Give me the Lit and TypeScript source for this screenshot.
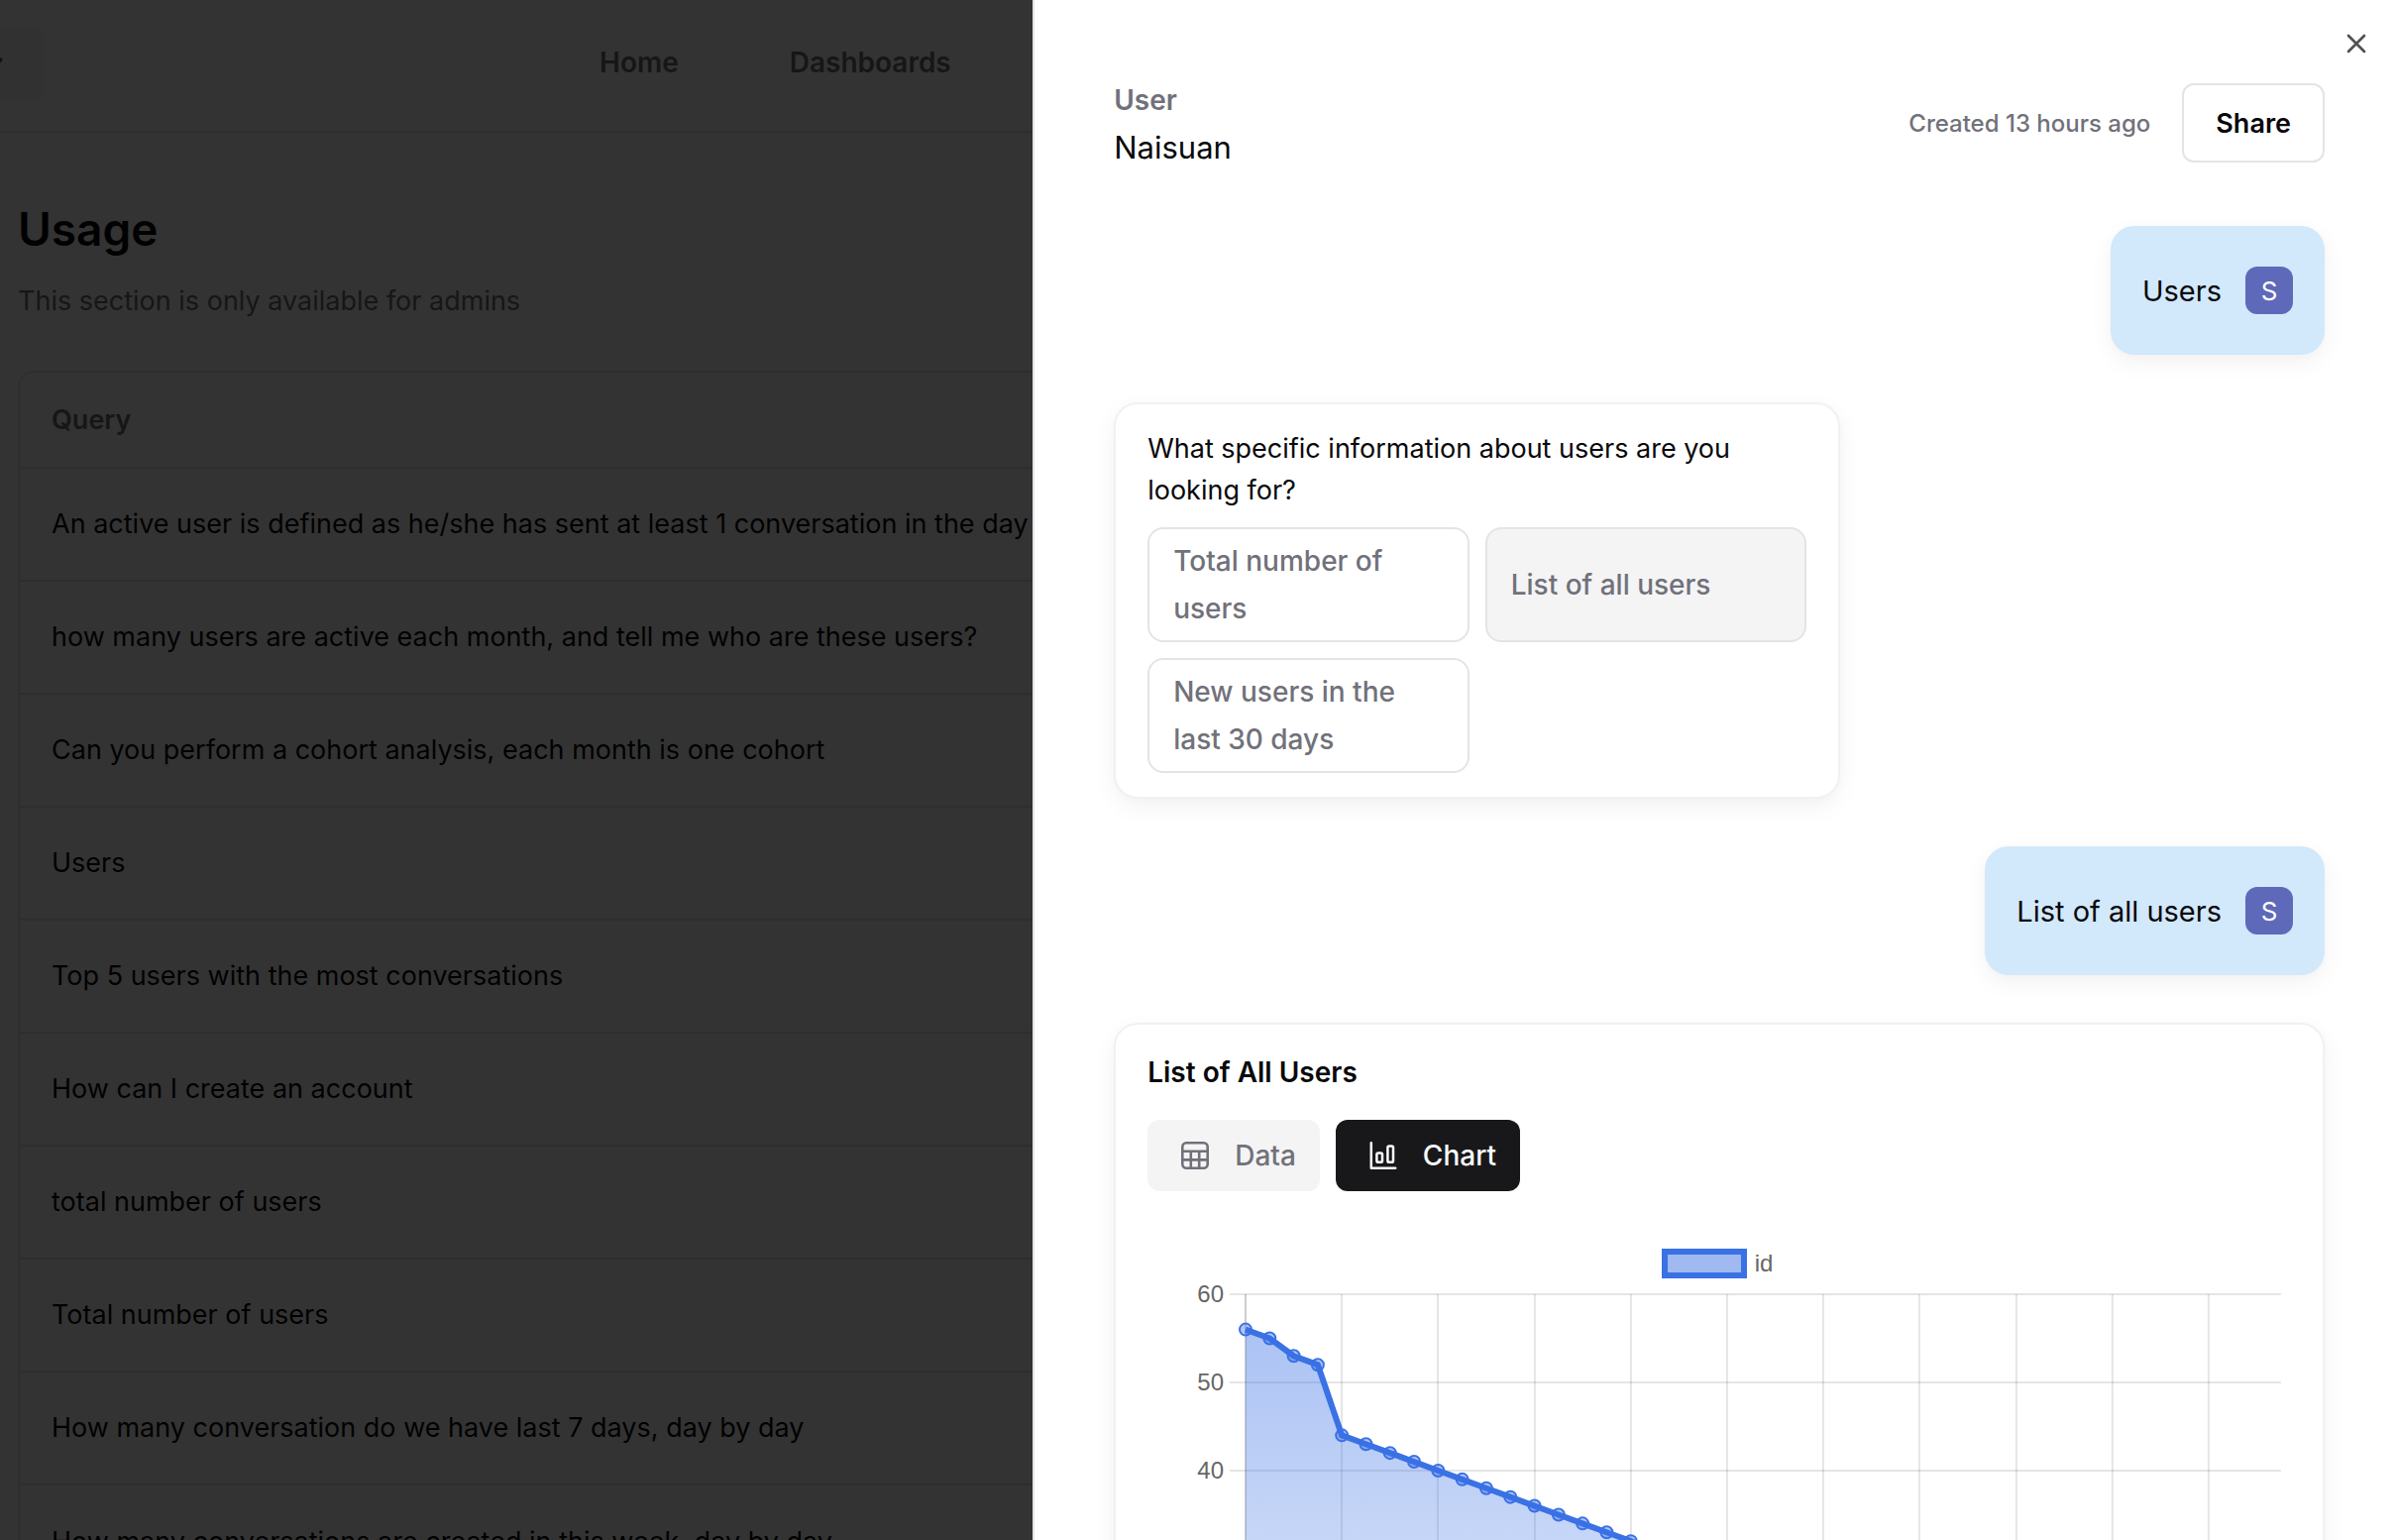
import { LitElement, html, css, svg } from "lit";
import { customElement } from "lit/decorators.js";

const QUERIES = [
  "An active user is defined as he/she has sent at least 1 conversation in the day",
  "how many users are active each month, and tell me who are these users?",
  "Can you perform a cohort analysis, each month is one cohort",
  "Users",
  "Top 5 users with the most conversations",
  "How can I create an account",
  "total number of users",
  "Total number of users",
  "How many conversation do we have last 7 days, day by day",
  "How many conversations are created in this week, day by day",
];

const IDS = [56, 55, 53, 52, 44, 43, 42, 41, 40, 39, 38, 37, 36, 35, 34, 33, 32, 31, 30];

@customElement("usage-page")
export class UsagePage extends LitElement {
  static styles = css`
    :host {
      display: block;
      min-width: 0;
      background: #fff;
      color: #09090b;
    }
    .bar {
      display: flex;
      align-items: center;
      height: 134px;
      box-sizing: border-box;
      border-bottom: 2px solid #e4e4e7;
    }
    .picker {
      width: 44px;
      height: 72px;
      padding: 0;
      border: 0;
      border-radius: 0 12px 12px 0;
      background: #f4f4f5;
      display: flex;
      align-items: center;
      margin-bottom: 4px;
    }
    nav {
      display: flex;
      gap: 112px;
      margin-left: 561px;
      margin-bottom: 6px;
    }
    nav a {
      color: #71717a;
      font-size: 28px;
      font-weight: 600;
      text-decoration: none;
    }
    .content {
      padding: 70px 0 0 18px;
    }
    h1 {
      margin: 0;
      font-size: 46px;
      line-height: 54px;
      font-weight: 600;
    }
    p {
      margin: 26px 0 50px;
      font-size: 27px;
      line-height: 40px;
      color: #71717a;
    }
    .frame {
      border: 2px solid #e4e4e7;
      border-radius: 16px;
    }
    table {
      width: 100%;
      border-collapse: collapse;
      font-size: 27px;
      line-height: 40px;
      text-align: left;
      white-space: nowrap;
    }
    th {
      height: 96px;
      padding: 0 32px;
      box-sizing: border-box;
      font-weight: 600;
      color: #71717a;
    }
    td {
      height: 114px;
      padding: 0 32px;
      box-sizing: border-box;
      border-top: 2px solid #e4e4e7;
    }
  `;

  render() {
    return html`
      <header class="bar">
        <button class="picker" aria-label="Switch workspace">
          <svg width="4" height="16" viewBox="0 0 4 16" aria-hidden="true">
            <path d="M-2 8 1 4" stroke="#52525b" stroke-width="3" stroke-linecap="round" fill="none" />
          </svg>
        </button>
        <nav>
          <a href="#home">Home</a>
          <a href="#dashboards">Dashboards</a>
        </nav>
      </header>
      <div class="content">
        <h1>Usage</h1>
        <p>This section is only available for admins</p>
        <div class="frame">
          <table>
            <thead>
              <tr><th>Query</th></tr>
            </thead>
            <tbody>
              ${QUERIES.map((q) => html`<tr><td>${q}</td></tr>`)}
            </tbody>
          </table>
        </div>
      </div>
    `;
  }
}

@customElement("id-chart")
export class IdChart extends LitElement {
  static styles = css`
    :host {
      display: block;
      font-family: "Liberation Sans", Arial, sans-serif;
    }
    .legend {
      display: flex;
      justify-content: center;
      align-items: center;
      gap: 8px;
      height: 30px;
      padding-right: 4px;
      font-size: 24px;
      color: #666;
    }
    .swatch {
      width: 86px;
      height: 30px;
      box-sizing: border-box;
      border: 6px solid #3a71e5;
      background: #a0b9f1;
    }
    svg {
      display: block;
      width: 100%;
      height: auto;
    }
    text {
      font-size: 24px;
      fill: #666;
      text-anchor: end;
    }
    .grid {
      stroke: #000;
      stroke-opacity: 0.1;
      stroke-width: 2;
    }
    .line {
      fill: none;
      stroke: #3a71e5;
      stroke-width: 6;
      stroke-linejoin: miter;
    }
    .dot {
      fill: #3a71e5;
      fill-opacity: 0.4;
      stroke: #3a71e5;
      stroke-width: 2;
    }
  `;

  render() {
    const left = 99;
    const right = 1144;
    const top = 16;
    const step = 24.3;
    const x = (i: number) => left + i * step;
    const y = (v: number) => top + (60 - v) * 8.9;
    const points = IDS.map((v, i) => `${x(i)},${y(v)}`).join(" ");
    const last = IDS.length - 1;
    return html`
      <div class="legend"><span class="swatch"></span><span>id</span></div>
      <svg viewBox="0 0 1154 560" role="img" aria-label="Line chart of id">
        <defs>
          <linearGradient id="fade" gradientUnits="userSpaceOnUse" x1="0" y1="0" x2="0" y2="550">
            <stop offset="0" stop-color="#3a71e5" stop-opacity="0.46" />
            <stop offset="1" stop-color="#3a71e5" stop-opacity="0.1" />
          </linearGradient>
        </defs>
        ${Array.from({ length: 11 }, (_, i) => {
          const gx = Math.round(x(i * 4));
          return svg`<line class="grid" x1=${gx} x2=${gx} y1=${top} y2="550" />`;
        })}
        <line class="grid" x1=${left} x2=${left} y1=${top} y2="550" />
        ${[60, 50, 40, 30, 20, 10, 0].map(
          (v) => svg`
            <line class="grid" x1=${left - 16} x2=${right} y1=${Math.round(y(v))} y2=${Math.round(y(v))} />
            <text x=${left - 22} y=${Math.round(y(v)) + 8}>${v}</text>`,
        )}
        <polygon fill="url(#fade)" points="${points} ${x(last)},550 ${left},550" />
        <polyline class="line" points=${points} />
        ${IDS.map((v, i) => svg`<circle class="dot" cx=${x(i)} cy=${y(v)} r="6" />`)}
      </svg>
    `;
  }
}

@customElement("conversation-panel")
export class ConversationPanel extends LitElement {
  static styles = css`
    :host {
      display: block;
      box-sizing: border-box;
      border-left: 2px solid #e4e4e7;
      background: #fff;
      color: #09090b;
      padding: 84px 72px 0 80px;
      overflow: hidden;
    }
    button {
      font: inherit;
      color: inherit;
      cursor: pointer;
    }
    .close {
      position: absolute;
      top: 28px;
      right: 24px;
      width: 32px;
      height: 32px;
      padding: 0;
      border: 0;
      background: none;
      display: grid;
      place-items: center;
    }
    .head {
      display: flex;
      align-items: center;
      justify-content: space-between;
      height: 80px;
    }
    .who {
      align-self: flex-start;
    }
    .label {
      font-size: 28px;
      line-height: 34px;
      font-weight: 600;
      color: #71717a;
    }
    .name {
      font-size: 31px;
      line-height: 62px;
    }
    .meta {
      display: flex;
      align-items: center;
      gap: 32px;
      font-size: 24px;
      font-weight: 500;
      color: #71717a;
    }
    .share {
      height: 80px;
      padding: 0 32px;
      border: 2px solid #e4e4e7;
      border-radius: 12px;
      background: #fff;
      color: #09090b;
      font-size: 27px;
      font-weight: 600;
    }
    .thread {
      display: flex;
      flex-direction: column;
      align-items: flex-start;
      gap: 48px;
      margin-top: 64px;
    }
    .mine,
    .card {
      border-radius: 24px;
      box-sizing: border-box;
      box-shadow:
        0 8px 24px rgba(0, 0, 0, 0.05),
        0 2px 8px rgba(0, 0, 0, 0.02);
    }
    .mine {
      align-self: flex-end;
      display: flex;
      align-items: center;
      gap: 24px;
      height: 130px;
      padding: 0 32px;
      background: #d2e8fb;
      font-size: 29px;
    }
    .avatar {
      width: 48px;
      height: 48px;
      border-radius: 12px;
      background: #5f69ba;
      color: #fff;
      font-size: 26px;
      display: grid;
      place-items: center;
    }
    .card {
      border: 2px solid #f1f1f2;
      background: #fff;
      padding: 24px 32px;
      font-size: 27px;
    }
    .ask {
      width: 60%;
      line-height: 42px;
    }
    .options {
      display: grid;
      grid-template-columns: 1fr 1fr;
      gap: 16px;
      margin-top: 16px;
    }
    .option {
      min-height: 116px;
      padding: 8px 24px;
      border: 2px solid #e4e4e7;
      border-radius: 16px;
      background: #fff;
      color: #71717a;
      font-size: 28px;
      font-weight: 500;
      line-height: 48px;
      text-align: left;
    }
    .option.chosen {
      background: #f4f4f5;
    }
    .result {
      width: 100%;
    }
    h2 {
      margin: 4px 0 28px;
      font-size: 28px;
      line-height: 40px;
      font-weight: 600;
    }
    .tabs {
      display: flex;
      gap: 16px;
      margin-bottom: 58px;
    }
    .tab {
      display: flex;
      align-items: center;
      gap: 24px;
      height: 72px;
      padding: 0 24px 0 32px;
      border: 0;
      border-radius: 12px;
      background: #f4f4f5;
      color: #71717a;
      font-size: 28px;
      font-weight: 500;
    }
    .tab.on {
      background: #18181b;
      color: #fafafa;
    }
  `;

  render() {
    return html`
      <button class="close" aria-label="Close">
        <svg width="32" height="32" viewBox="0 0 24 24" fill="none" stroke="#505052" stroke-width="2" stroke-linecap="round" aria-hidden="true">
          <path d="M18 6 6 18M6 6l12 12" />
        </svg>
      </button>
      <div class="head">
        <div class="who">
          <div class="label">User</div>
          <div class="name">Naisuan</div>
        </div>
        <div class="meta">
          <span>Created 13 hours ago</span>
          <button class="share">Share</button>
        </div>
      </div>
      <div class="thread">
        <div class="mine"><span>Users</span><span class="avatar">S</span></div>
        <div class="card ask">
          <div>What specific information about users are you looking for?</div>
          <div class="options">
            <button class="option">Total number of users</button>
            <button class="option chosen">List of all users</button>
            <button class="option">New users in the last 30 days</button>
          </div>
        </div>
        <div class="mine"><span>List of all users</span><span class="avatar">S</span></div>
        <div class="card result">
          <h2>List of All Users</h2>
          <div class="tabs">
            <button class="tab">
              <svg width="32" height="32" viewBox="0 0 32 32" fill="none" stroke="currentColor" stroke-width="2.6" aria-hidden="true">
                <rect x="3.3" y="3.3" width="25.4" height="25.4" rx="4" />
                <path d="M3 11.8h26M3 20.4h26M11.8 12v17M20.2 12v17" />
              </svg>
              Data
            </button>
            <button class="tab on">
              <svg width="32" height="32" viewBox="0 0 32 32" fill="none" stroke="currentColor" stroke-width="2.5" stroke-linecap="round" stroke-linejoin="round" aria-hidden="true">
                <path d="M3.8 3.3v25.4h24.4" />
                <rect x="9.4" y="13.4" width="5.6" height="9.4" rx="1.6" />
                <rect x="20.4" y="6.4" width="5.6" height="16.4" rx="1.6" />
              </svg>
              Chart
            </button>
          </div>
          <id-chart></id-chart>
        </div>
      </div>
    `;
  }
}

@customElement("app-root")
export class AppRoot extends LitElement {
  static styles = css`
    :host {
      display: block;
      position: relative;
      height: 100vh;
      overflow: hidden;
      font-family: Inter, "Liberation Sans", sans-serif;
    }
    .scrim {
      position: absolute;
      inset: 0;
      background: rgba(0, 0, 0, 0.8);
    }
    .drawer {
      position: absolute;
      top: 0;
      bottom: 0;
      right: 0;
      width: 56.9%;
    }
  `;

  render() {
    return html`
      <usage-page></usage-page>
      <div class="scrim"></div>
      <conversation-panel class="drawer"></conversation-panel>
    `;
  }
}
